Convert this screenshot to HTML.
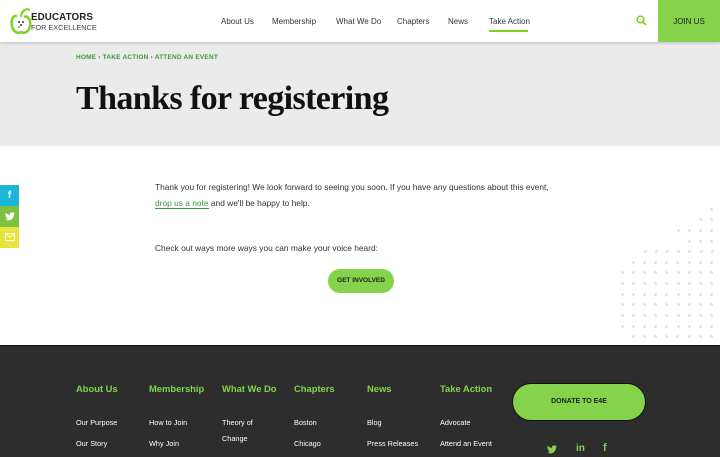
<!DOCTYPE html>
<html><head><meta charset="utf-8"><style>
*{margin:0;padding:0;box-sizing:border-box}
body{width:720px;height:457px;overflow:hidden;font-family:"Liberation Sans",sans-serif;background:#fff;position:relative}
.hdr{position:absolute;left:0;top:0;width:720px;height:42px;background:#fff;box-shadow:0 1px 3px rgba(0,0,0,.2);z-index:2}
.nav a{position:absolute;top:17px;font-size:8px;color:#333;text-decoration:none}
.join{position:absolute;left:658px;top:0;width:62px;height:42px;background:#84d34a;font-size:8px;color:#222;text-align:center;line-height:44px}
.band{position:absolute;left:0;top:42px;width:720px;height:104px;background:#ebebeb}
.bc{position:absolute;left:76px;top:54px;font-size:6.5px;font-weight:bold;color:#3a9a3a;letter-spacing:.2px}
h1{position:absolute;left:76px;top:80px;font-family:"Liberation Serif",serif;font-size:34px;font-weight:bold;color:#111;letter-spacing:-.6px}
.p{position:absolute;left:155px;font-size:8.4px;color:#333}
.p a{color:#3a9a3a;text-decoration:none;border-bottom:1px solid #3a9a3a}
.btn{position:absolute;left:328px;top:269px;width:66px;height:24px;border-radius:12px;background:#84d34a;font-size:6.5px;font-weight:bold;color:#222;text-align:center;line-height:24px}
.soc{position:absolute;left:0;width:19px;height:21px;color:#fff;font-size:10px;font-weight:bold;text-align:center;line-height:21px}
.dot{position:absolute;width:3px;height:3px;border-radius:50%;background:#e3e3e3}
.ft{position:absolute;left:0;top:345px;width:720px;height:112px;background:#2d2d2d;border-top:1px solid #111}
.fh{position:absolute;top:383px;font-size:9.4px;font-weight:bold;color:#84d34a}
.fl{position:absolute;font-size:7.3px;color:#fff}
.don{position:absolute;left:512px;top:383px;width:134px;height:38px;border-radius:19px;background:#84d34a;border:1px solid #111;font-size:7px;font-weight:bold;color:#222;text-align:center;line-height:36px}
</style></head><body>
<div class="hdr">
<svg style="position:absolute;left:10px;top:7px" width="22" height="28" viewBox="0 0 22 28"><path d="M7 9 C2 8 1 14 2 19 C3 25 8 27 11 25 C14 27 19 25 20 19 C21 13 18 8 14 10" fill="none" stroke="#7ed321" stroke-width="2.5"/><path d="M11 10 C11 5 14 3 17 2 L20 3" fill="none" stroke="#7ed321" stroke-width="2"/><circle cx="9" cy="15" r="1" fill="#333"/><circle cx="13" cy="15" r="1" fill="#333"/><circle cx="11" cy="18" r="1" fill="#333"/><circle cx="9" cy="20" r=".8" fill="#333"/></svg>
<div style="position:absolute;left:31px;top:12px;font-size:9.8px;font-weight:bold;color:#222;letter-spacing:.1px">EDUCATORS</div>
<div style="position:absolute;left:31px;top:23px;font-size:7.3px;color:#444">FOR EXCELLENCE</div>
<div class="nav"><a style="left:221px">About Us</a><a style="left:272px">Membership</a><a style="left:336px">What We Do</a><a style="left:397px">Chapters</a><a style="left:448px">News</a><a style="left:489px">Take Action</a></div>
<div style="position:absolute;left:489px;top:30px;width:39px;height:2px;background:#7ed321"></div>
<svg style="position:absolute;left:636px;top:15px" width="11" height="11" viewBox="0 0 11 11"><circle cx="4.5" cy="4.5" r="3.3" fill="none" stroke="#7ed321" stroke-width="1.6"/><path d="M7 7 L10 10" stroke="#7ed321" stroke-width="1.8"/></svg>
<div class="join">JOIN US</div>
</div>
<div class="band"></div>
<div class="bc">HOME › TAKE ACTION › ATTEND AN EVENT</div>
<h1>Thanks for registering</h1>
<div class="soc" style="top:185px;background:#1ab7d8">f</div>
<div class="soc" style="top:206px;background:#7cc142">
<svg width="10" height="9" viewBox="0 0 24 20" style="margin-top:6px"><path fill="#fff" d="M24 2.4a10 10 0 0 1-2.8.8A5 5 0 0 0 23.3.4a10 10 0 0 1-3.1 1.2A4.9 4.9 0 0 0 11.8 6 14 14 0 0 1 1.7.9a4.9 4.9 0 0 0 1.5 6.6 5 5 0 0 1-2.200-.6 4.9 4.9 0 0 0 3.9 4.9 5 5 0 0 1-2.2.1 4.9 4.9 0 0 0 4.6 3.4A9.9 9.9 0 0 1 0 17.3 14 14 0 0 0 7.5 19.5c9 0 14-7.5 14-14v-.6A10 10 0 0 0 24 2.4z"/></svg></div>
<div class="soc" style="top:227px;background:#e9e43a"><svg width="10" height="8" viewBox="0 0 10 8" style="margin-top:6px"><rect x=".5" y=".5" width="9" height="7" fill="none" stroke="#fff"/><path d="M.5 .5 L5 4.5 L9.5 .5" fill="none" stroke="#fff"/></svg></div>
<div class="p" style="top:182px">Thank you for registering! We look forward to seeing you soon. If you have any questions about this event,</div>
<div class="p" style="top:198px"><a>drop us a note</a> and we'll be happy to help.</div>
<div class="p" style="top:243px">Check out ways more ways you can make your voice heard:</div>
<div class="btn">GET INVOLVED</div>
<div id="dots"></div>
<div class="ft"></div>
<div class="fh" style="left:76px">About Us</div><div class="fh" style="left:149px">Membership</div><div class="fh" style="left:222px">What We Do</div><div class="fh" style="left:294px">Chapters</div><div class="fh" style="left:367px">News</div><div class="fh" style="left:440px">Take Action</div>
<div class="fl" style="left:76px;top:418px">Our Purpose</div><div class="fl" style="left:76px;top:439px">Our Story</div>
<div class="fl" style="left:149px;top:418px">How to Join</div><div class="fl" style="left:149px;top:439px">Why Join</div>
<div class="fl" style="left:222px;top:418px">Theory of</div><div class="fl" style="left:222px;top:434px">Change</div>
<div class="fl" style="left:294px;top:418px">Boston</div><div class="fl" style="left:294px;top:439px">Chicago</div>
<div class="fl" style="left:367px;top:418px">Blog</div><div class="fl" style="left:367px;top:439px">Press Releases</div>
<div class="fl" style="left:440px;top:418px">Advocate</div><div class="fl" style="left:440px;top:439px">Attend an Event</div>
<div class="don">DONATE TO E4E</div>
<svg style="position:absolute;left:547px;top:445px" width="10" height="9" viewBox="0 0 24 20"><path fill="#84d34a" d="M24 2.4a10 10 0 0 1-2.8.8A5 5 0 0 0 23.3.4a10 10 0 0 1-3.1 1.2A4.9 4.9 0 0 0 11.8 6 14 14 0 0 1 1.7.9a4.9 4.9 0 0 0 1.5 6.6 5 5 0 0 1-2.2-.6 4.9 4.9 0 0 0 3.9 4.9 5 5 0 0 1-2.2.1 4.9 4.9 0 0 0 4.6 3.4A9.9 9.9 0 0 1 0 17.3 14 14 0 0 0 7.5 19.5c9 0 14-7.5 14-14v-.6A10 10 0 0 0 24 2.4z"/></svg>
<div style="position:absolute;left:576px;top:443px;font-size:10px;font-weight:bold;color:#84d34a">in</div>
<div style="position:absolute;left:603px;top:442px;font-size:11px;font-weight:bold;color:#84d34a">f</div>
<script>
var rows=[[209,711,711],[219,700,711],[230,678,711],[241,689,711],[251,645,711],[262,633,711],[272,622,711],[283,622,711],[294,622,711],[304,622,711],[315,622,711],[326,622,711],[336,633,711]];
var h='';rows.forEach(function(r){for(var x=r[1];x<=r[2]+1;x+=11.1){h+='<div class="dot" style="left:'+(Math.round(x)-1)+'px;top:'+(r[0]-1)+'px"></div>';}});
document.getElementById('dots').innerHTML=h;
</script>
</body></html>
